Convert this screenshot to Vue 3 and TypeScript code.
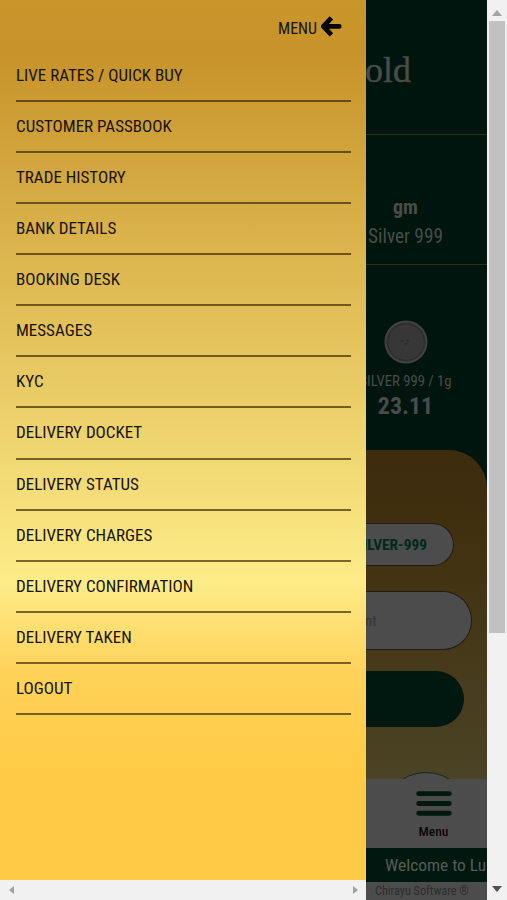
<script setup lang="ts">
const menuItems: string[] = [
  'LIVE RATES / QUICK BUY',
  'CUSTOMER PASSBOOK',
  'TRADE HISTORY',
  'BANK DETAILS',
  'BOOKING DESK',
  'MESSAGES',
  'KYC',
  'DELIVERY DOCKET',
  'DELIVERY STATUS',
  'DELIVERY CHARGES',
  'DELIVERY CONFIRMATION',
  'DELIVERY TAKEN',
  'LOGOUT',
]
</script>

<template>
  <div class="screen">
    <aside class="drawer">
      <nav class="drawer-body">
        <button class="close" type="button">
          <span class="cond close-label">MENU</span>
          <svg width="22" height="22" viewBox="0 0 22 22">
            <path d="M10.4 1.9 L2.4 10.4 L10.4 18.9" fill="none" stroke="#000" stroke-width="4.8" />
            <path d="M3.4 10.4 H18.2" fill="none" stroke="#000" stroke-width="4.8" stroke-linecap="round" />
          </svg>
        </button>
        <ul class="menu">
          <li v-for="item in menuItems" :key="item"><span class="cond">{{ item }}</span></li>
        </ul>
      </nav>
      <div class="hbar">
        <svg width="5" height="8" viewBox="0 0 5 8"><path d="M5 0V8L0 4Z" fill="#a0a0a0" /></svg>
        <svg width="5" height="8" viewBox="0 0 5 8"><path d="M0 0V8L5 4Z" fill="#a0a0a0" /></svg>
      </div>
    </aside>

    <main class="page">
      <header class="brand"><span>old</span></header>
      <section class="unit">
        <div class="centered"><b class="cond">gm</b></div>
        <div class="centered"><span class="cond silver">Silver 999</span></div>
      </section>
      <section class="product">
        <svg class="coin" width="44" height="44" viewBox="0 0 44 44">
          <circle cx="22" cy="22" r="20.5" fill="#323332" stroke="#414341" stroke-width="2" />
          <circle cx="22" cy="22" r="18.3" fill="#363736" stroke="#292b2a" stroke-width="1" />
          <path d="M17 22q1-3 3-1M20 24q3 1 4-2t-2-2" fill="none" stroke="#292929" />
        </svg>
        <div class="centered name"><span class="cond">SILVER 999 / 1g</span></div>
        <div class="centered price"><b class="cond">23.11</b></div>
      </section>
      <section class="trade">
        <div class="pill"><b class="cond">SILVER-999</b></div>
        <div class="field"><span class="cond">nt</span></div>
        <div class="submit"></div>
        <div class="bubble"></div>
      </section>
      <nav class="tab">
        <svg width="36" height="25" viewBox="0 0 36 25">
          <path d="M2.7 2.6H33.3M2.7 12.5H33.3M2.7 22.3H33.3" stroke="#01180f" stroke-width="4.9" stroke-linecap="round" />
        </svg>
        <span class="cond">Menu</span>
      </nav>
      <div class="ticker"><span class="cond">Welcome to Luc</span></div>
      <footer class="credit"><span class="cond">Chirayu Software ®</span></footer>
    </main>

    <div class="vbar">
      <svg width="10" height="6" viewBox="0 0 10 6"><path d="M0 6H10L5 0Z" fill="#a3a3a3" /></svg>
      <div class="thumb"></div>
      <svg class="down" width="10" height="6" viewBox="0 0 10 6"><path d="M0 0H10L5 6Z" fill="#505050" /></svg>
    </div>
  </div>
</template>

<style>
body {
  overflow: hidden;
}
</style>

<style scoped>
.screen {
  display: grid;
  grid-template-columns: 366px 121px 20px;
  width: 507px;
  height: 900px;
  overflow: hidden;
  font-family: 'Roboto Condensed', Roboto, sans-serif;
  font-stretch: 75%;
  color: #17120a;
}
.cond {
  display: inline-block;
  white-space: nowrap;
}
.drawer {
  display: flex;
  flex-direction: column;
  min-width: 0;
}
.drawer-body {
  box-sizing: border-box;
  height: 880px;
  padding: 0 15px 0 16px;
  background: linear-gradient(180deg, #c9962c 0%, #c7932a 6%, #fdec88 66%, #fed158 77%, #ffcb46 88%, #ffca45 100%);
}
.close {
  display: flex;
  align-items: flex-start;
  justify-content: flex-end;
  gap: 4px;
  box-sizing: border-box;
  width: 100%;
  height: 50.9px;
  padding: 16px 8px 0 0;
  border: 0;
  background: none;
  font: inherit;
  font-size: 16px;
  color: #17120a;
}
.close-label {
  line-height: 26px;
}
.menu {
  margin: 0;
  padding: 0;
  list-style: none;
}
.menu li {
  box-sizing: border-box;
  height: 51.08px;
  border-bottom: 2px solid rgba(50, 34, 0, 0.65);
  font-size: 17px;
  line-height: 49.4px;
}
.hbar {
  display: flex;
  align-items: center;
  justify-content: space-between;
  height: 20px;
  padding: 0 8px 0 9px;
  background: #f1f1f1;
}
.page {
  display: flex;
  flex-direction: column;
  min-width: 0;
  overflow: hidden;
  background: #00150d;
  color: #484c4a;
}
.centered {
  display: flex;
  justify-content: center;
  width: 79px;
}
.brand {
  box-sizing: border-box;
  display: flex;
  justify-content: flex-end;
  height: 135px;
  padding: 50px 76px 0 0;
  border-bottom: 1px solid #302f12;
  font-family: 'Liberation Serif', serif;
  font-size: 36px;
  line-height: 40px;
  -webkit-text-stroke: 0.4px #484c4a;
}
.unit {
  box-sizing: border-box;
  height: 130px;
  padding-top: 58px;
  border-bottom: 1px solid #302f12;
  font-size: 20px;
  line-height: 29px;
}
.silver {
  font-size: 19.3px;
}
.product {
  height: 185px;
}
.coin {
  display: block;
  margin: 55px 0 0 18px;
}
.name {
  margin-top: 7px;
  font-size: 14.7px;
  line-height: 20px;
}
.price {
  font-size: 24px;
  line-height: 30px;
}
.trade {
  box-sizing: border-box;
  height: 329px;
  padding-top: 73px;
  overflow: hidden;
  border-radius: 0 38px 0 0;
  background: linear-gradient(180deg, #3d2b0e 0%, #40300f 25%, #4b4325 100%);
}
.pill {
  display: flex;
  align-items: center;
  justify-content: flex-end;
  box-sizing: border-box;
  width: 88px;
  height: 43px;
  padding-right: 26px;
  border: 1px solid #201a19;
  border-left: 0;
  border-radius: 0 22px 22px 0;
  background: #4c4c4d;
  color: #01281a;
  font-size: 15.4px;
}
.field {
  display: flex;
  align-items: center;
  box-sizing: border-box;
  width: 106px;
  height: 59px;
  margin-top: 25px;
  border: 1px solid #201a19;
  border-left: 0;
  border-radius: 0 29px 29px 0;
  background: #4c4c4d;
  color: #343535;
  font-size: 15px;
}
.field .cond {
  margin-left: -1px;
}
.submit {
  width: 98px;
  height: 56px;
  margin-top: 21px;
  border-radius: 0 28px 28px 0;
  background: #00180f;
}
.bubble {
  box-sizing: border-box;
  width: 90px;
  height: 90px;
  margin: 45px 0 0 15px;
  border: 1px solid #14281d;
  border-radius: 50%;
  background: #4c4c4c;
}
.tab {
  display: flex;
  flex-direction: column;
  align-items: center;
  box-sizing: border-box;
  height: 69px;
  padding: 12px 0 0 14px;
  background: #4c4c4c;
  color: #080808;
  font-size: 13.5px;
  font-weight: 500;
  line-height: 30px;
}
.ticker {
  height: 34px;
  padding-left: 19px;
  overflow: hidden;
  background: #00180f;
  color: #575c59;
  font-size: 17.4px;
  line-height: 35px;
}
.credit {
  height: 18px;
  padding-left: 9px;
  background: #4c4c4c;
  color: #2c2c2c;
  font-size: 12.2px;
  line-height: 18px;
}
.vbar {
  display: flex;
  flex-direction: column;
  align-items: center;
  box-sizing: border-box;
  padding: 10px 0 8px;
  background: #f1f1f1;
}
.thumb {
  width: 16px;
  height: 612px;
  margin-top: 5px;
  background: #c1c1c1;
}
.down {
  margin-top: auto;
}
</style>
